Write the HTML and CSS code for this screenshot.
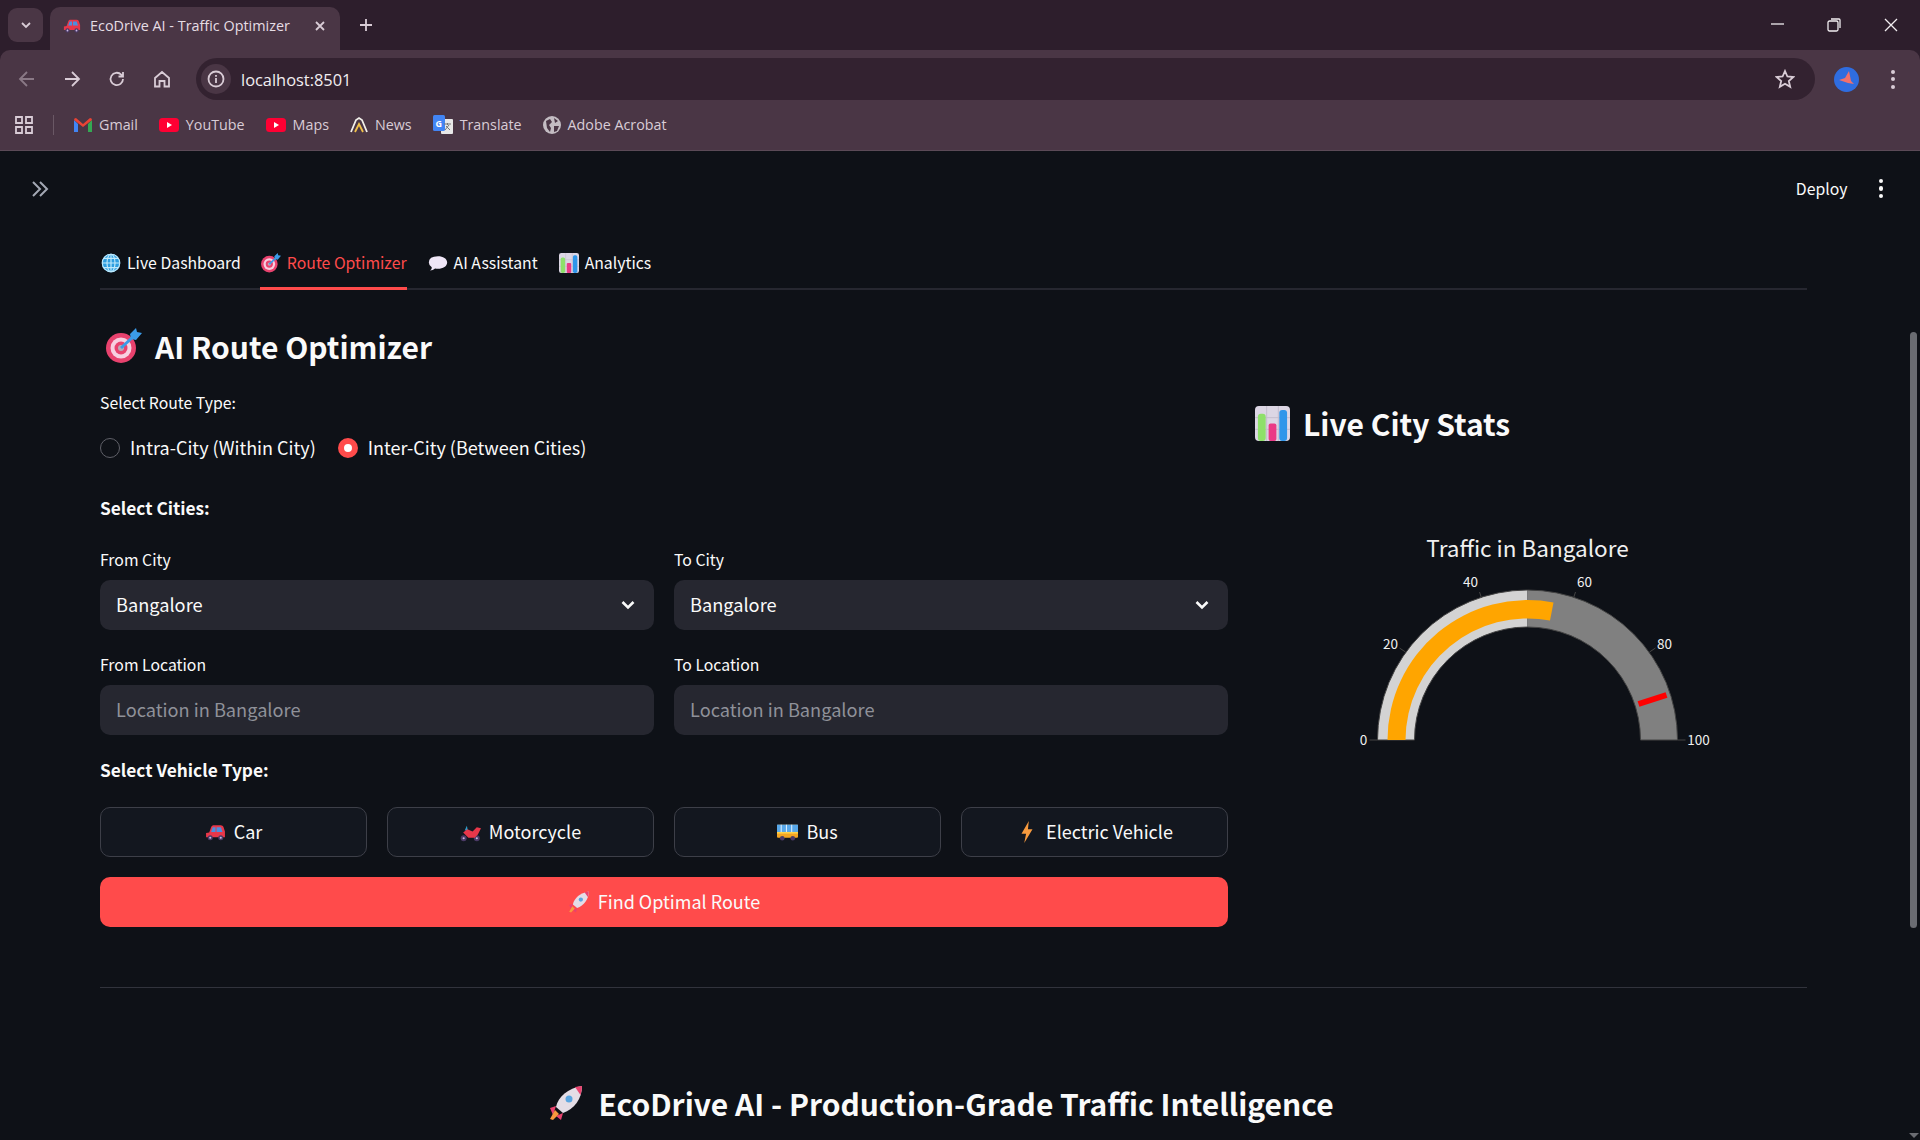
FILE: index.html
```html
<!DOCTYPE html>
<html lang="en">
<head>
    <meta charset="UTF-8">
    <meta name="viewport" content="width=device-width, initial-scale=1.0">
    <title>EcoDrive AI - Traffic Optimizer</title>
    <link rel="stylesheet" href="styles.css">
</head>
<body>
    <!-- Emoji drawings, reused below -->
    <svg class="defs" width="0" height="0">
        <symbol id="e-car" viewBox="0 0 20 20">
            <path d="M1 10.500L4 10l2-5.500Q6.500 3 8 3h7q2 0 2.500 1.500L19 9v5.500H1z" fill="#e8374a"/>
            <path d="M7.300 5H10v4.500H5.800zM11 5h4.200l1.500 4.500H11z" fill="#4b8fe0"/>
            <circle cx="5" cy="15" r="2.400" fill="#4b3a66"/>
            <circle cx="15" cy="15" r="2.400" fill="#4b3a66"/>
            <circle cx="5" cy="15" r="1" fill="#c9b8e0"/>
            <circle cx="15" cy="15" r="1" fill="#c9b8e0"/>
        </symbol>
        <symbol id="e-target" viewBox="0 0 36 36">
            <circle cx="15" cy="20" r="15" fill="#e8426e"/>
            <circle cx="15" cy="20" r="10.500" fill="#f7cfe0"/>
            <circle cx="15" cy="20" r="6.500" fill="#e8426e"/>
            <circle cx="15" cy="20" r="3" fill="#b9a9b8"/>
            <path d="M15 20L29 7" stroke="#3b9be8" stroke-width="3"/>
            <path d="M24 6l6-6 1 4 5 1-6 7-5-1z" fill="#3b9be8"/>
        </symbol>
        <symbol id="e-globe" viewBox="0 0 24 24">
            <circle cx="12" cy="12" r="11" fill="#2d9ee0"/>
            <g fill="none" stroke="#bfe9fb" stroke-width="1.400">
                <circle cx="12" cy="12" r="10.500"/>
                <ellipse cx="12" cy="12" rx="4.800" ry="10.500"/>
                <path d="M12 1.500v21M1.500 12h21M3 6.500h18M3 17.500h18"/>
            </g>
        </symbol>
        <symbol id="e-bubble" viewBox="0 0 24 24">
            <path d="M12 4c6 0 11 3 11 7.500S18 19 12 19q-2 0-3.500-.5Q6 21 2.500 21 5 19 4.500 17 1 15 1 11.500 1 4 12 4z" fill="#efe6f7"/>
        </symbol>
        <symbol id="e-chart" viewBox="0 0 36 36">
            <rect width="36" height="36" rx="4" fill="#dcd6e4"/>
            <path d="M12 0v36M24 0v36M0 12h36M0 24h36" stroke="#c3bccd" stroke-width="1"/>
            <rect x="3" y="8" width="8" height="28" rx="3" fill="#8ee06a"/>
            <rect x="14" y="18" width="8" height="18" rx="2" fill="#ea3a86"/>
            <rect x="25" y="4" width="8" height="32" rx="3" fill="#2f96ea"/>
        </symbol>
        <symbol id="e-moto" viewBox="0 0 20 20">
            <path d="M4.500 8l2-4.500 1 4.500z" fill="#2f9ec9"/>
            <circle cx="3.500" cy="15.500" r="2.800" fill="#4b3a66"/>
            <circle cx="16" cy="15.500" r="2.800" fill="#4b3a66"/>
            <circle cx="3.500" cy="15.500" r="1" fill="#c9b8e0"/>
            <circle cx="16" cy="15.500" r="1" fill="#c9b8e0"/>
            <path d="M3 10l4-3 5 2 4-4 4 1-3 6-3 3H8z" fill="#e8374a"/>
        </symbol>
        <symbol id="e-bus" viewBox="0 0 20 20">
            <rect y="2.500" width="20" height="12.500" rx="1" fill="#f5a623"/>
            <rect y="2.500" width="20" height="7" fill="#58a8ea"/>
            <path d="M4 2.500v7M9 2.500v7M14 2.500v7" stroke="#dcefff" stroke-width="1"/>
            <rect y="9.500" width="20" height="1.500" fill="#ffd34d"/>
            <circle cx="5" cy="15.500" r="2.200" fill="#4b3a66"/>
            <circle cx="15" cy="15.500" r="2.200" fill="#4b3a66"/>
        </symbol>
        <symbol id="e-bolt" viewBox="0 0 24 24">
            <path d="M14 0L6 14h5l-2 10 9-15h-5z" fill="#f79a3e"/>
        </symbol>
        <symbol id="e-rocket" viewBox="0 0 36 36">
            <path d="M8 22C10 12 20 3 34 1c0 13-8 23-19 27z" fill="#e4dde6"/>
            <path d="M27 2l7-1c0 3-.5 6-1.500 9z" fill="#e8426e"/>
            <circle cx="21" cy="14" r="3.500" fill="#5aa5e0"/>
            <path d="M8 21l-6 2 3 7zM15 28l-2 7-5-4z" fill="#e8426e"/>
            <path d="M7 25l4 4-6 6-3-1z" fill="#f79a3e"/>
        </symbol>
    </svg>

    <!-- Browser chrome -->
    <header class="browser">
        <div class="tabstrip">
            <button class="tab-search">
                <svg width="12" height="12" viewBox="0 0 12 12"><path d="M2 4l4 4 4-4" class="line-2"/></svg>
            </button>
            <div class="tab">
                <svg class="favicon" width="18" height="18"><use href="#e-car"/></svg>
                <span class="tab-title">EcoDrive AI - Traffic Optimizer</span>
                <svg class="tab-close" width="12" height="12" viewBox="0 0 12 12"><path d="M2 2l8 8M10 2l-8 8" class="line-2"/></svg>
            </div>
            <svg class="new-tab" width="14" height="14" viewBox="0 0 14 14"><path d="M7 1v12M1 7h12" class="line-2"/></svg>
            <div class="window-controls">
                <svg width="14" height="14" viewBox="0 0 14 14"><path d="M1 6h13" class="line-1"/></svg>
                <svg width="14" height="14" viewBox="0 0 14 14"><rect x="1" y="3" width="10" height="10" rx="1.500" class="line-1"/><path d="M4 1h8q1 0 1 1v8" class="line-1"/></svg>
                <svg width="14" height="14" viewBox="0 0 14 14"><path d="M1 1l12 12M13 1L1 13" class="line-1"/></svg>
            </div>
        </div>
        <div class="toolbar">
            <div class="nav-buttons">
                <svg class="dim" width="18" height="18" viewBox="0 0 18 18"><path d="M16 9H2M9 2L2 9l7 7" class="line-2"/></svg>
                <svg width="18" height="18" viewBox="0 0 18 18"><path d="M2 9h14M9 2l7 7-7 7" class="line-2"/></svg>
                <svg width="18" height="18" viewBox="0 0 18 18"><path d="M15 9a6.200 6.200 0 1 1-1.800-4.400L15 6.500M15 2v4.500h-4.500" class="line-2"/></svg>
                <svg width="18" height="18" viewBox="0 0 18 18"><path d="M2 8l7-6 7 6v8.500h-4.500V11h-5v5.500H2z" class="line-2"/></svg>
            </div>
            <div class="omnibox">
                <span class="site-chip">
                    <svg width="18" height="18" viewBox="0 0 18 18"><circle cx="9" cy="9" r="7.500" class="line-2"/><path d="M9 8v5M9 5v1.800" class="line-2"/></svg>
                </span>
                <span class="url">localhost:8501</span>
                <svg class="star" width="20" height="20" viewBox="0 0 20 20"><path d="M10 2l2.400 5.500 6 .5-4.600 4 1.400 5.800L10 14.800l-5.200 3 1.400-5.800-4.600-4 6-.5z" class="line-2"/></svg>
            </div>
            <div class="avatar">
                <svg width="25" height="25" viewBox="0 0 25 25"><circle cx="12.500" cy="12.500" r="12.500" fill="#2f6de0"/><path d="M15 4l2 10 3 3-6-1-9-3 6-2z" fill="#f0706c"/></svg>
            </div>
            <div class="more-dots"><i></i><i></i><i></i></div>
        </div>
        <nav class="bookmarks">
            <svg class="apps" width="18" height="18" viewBox="0 0 18 18"><path d="M1 1h6v6H1zM11 1h6v6h-6zM1 11h6v6H1zM11 11h6v6h-6z" class="line-2"/></svg>
            <span class="bm-sep"></span>
            <a class="bm">
                <svg width="18" height="14" viewBox="0 0 18 14"><path d="M0 2v12h4V6z" fill="#4285f4"/><path d="M14 6v8h4V2z" fill="#34a853"/><path d="M0 2q0-2 2-2l7 6 7-6q2 0 2 2l-9 7z" fill="#ea4335"/></svg>Gmail</a>
            <a class="bm">
                <svg width="20" height="14" viewBox="0 0 20 14"><rect width="20" height="14" rx="3.500" fill="#ff0033"/><path d="M8 4l5 3-5 3z" fill="#fff"/></svg>YouTube</a>
            <a class="bm">
                <svg width="20" height="14" viewBox="0 0 20 14"><rect width="20" height="14" rx="3.500" fill="#ff0033"/><path d="M8 4l5 3-5 3z" fill="#fff"/></svg>Maps</a>
            <a class="bm">
                <svg width="18" height="18" viewBox="0 0 18 18"><path d="M1 16L6 4l3-2 3 2 5 12" fill="none" stroke="#f2f0ea" stroke-width="1.800"/><path d="M5 16l4-8 4 8" fill="none" stroke="#f0c14a" stroke-width="1.800"/></svg>News</a>
            <a class="bm">
                <svg width="20" height="20" viewBox="0 0 20 20"><rect x="8" y="4" width="12" height="15" rx="1" fill="#e8e8e8"/><rect width="12" height="16" rx="1.500" fill="#4285f4"/><text x="2.500" y="12" class="bm-g">G</text><path d="M11 9h7M14.500 8v2M12 15l4-5M13 11l4 4" stroke="#777" stroke-width="1" fill="none"/></svg>Translate</a>
            <a class="bm">
                <svg width="18" height="18" viewBox="0 0 18 18"><circle cx="9" cy="9" r="9" fill="#c3bcc2"/><path d="M3 5l4-2 2 3-3 3 2 3-1 4-3-4zM11 2l4 3-3 2zM11 10h5l-2 5-3 1z" fill="#4a3645"/></svg>Adobe Acrobat</a>
        </nav>
    </header>

    <div class="app">
        <div class="app-header">
            <svg class="sidebar-toggle" width="20" height="20" viewBox="0 0 20 20"><path d="M3 3l7 7-7 7M10 3l7 7-7 7"/></svg>
            <span class="deploy">Deploy</span>
            <div class="app-dots"><i></i><i></i><i></i></div>
        </div>

        <main class="main">
            <div class="tabs">
                <div class="tab-item"><svg width="20" height="20"><use href="#e-globe"/></svg>Live Dashboard</div>
                <div class="tab-item active"><svg width="20" height="20"><use href="#e-target"/></svg>Route Optimizer</div>
                <div class="tab-item"><svg width="20" height="20"><use href="#e-bubble"/></svg>AI Assistant</div>
                <div class="tab-item"><svg width="20" height="20"><use href="#e-chart"/></svg>Analytics</div>
            </div>

            <div class="columns">
                <section class="col-left">
                    <h2 class="page-title"><svg width="36" height="36"><use href="#e-target"/></svg>AI Route Optimizer</h2>
                    <div class="field-label route-label">Select Route Type:</div>
                    <div class="radio-group">
                        <label class="radio"><span class="dot"></span>Intra-City (Within City)</label>
                        <label class="radio checked"><span class="dot"></span>Inter-City (Between Cities)</label>
                    </div>
                    <div class="sub-title cities-title">Select Cities:</div>
                    <div class="field-grid">
                        <div class="field">
                            <div class="field-label">From City</div>
                            <div class="control">Bangalore
                                <svg width="14" height="10" viewBox="0 0 14 10"><path d="M1.500 2l5.500 5.500L12.500 2"/></svg>
                            </div>
                        </div>
                        <div class="field">
                            <div class="field-label">To City</div>
                            <div class="control">Bangalore
                                <svg width="14" height="10" viewBox="0 0 14 10"><path d="M1.500 2l5.500 5.500L12.500 2"/></svg>
                            </div>
                        </div>
                        <div class="field">
                            <div class="field-label">From Location</div>
                            <div class="control placeholder">Location in Bangalore</div>
                        </div>
                        <div class="field">
                            <div class="field-label">To Location</div>
                            <div class="control placeholder">Location in Bangalore</div>
                        </div>
                    </div>
                    <div class="sub-title vehicle-title">Select Vehicle Type:</div>
                    <div class="vehicle-row">
                        <button class="btn"><svg width="21" height="21"><use href="#e-car"/></svg>Car</button>
                        <button class="btn"><svg width="21" height="21"><use href="#e-moto"/></svg>Motorcycle</button>
                        <button class="btn"><svg width="21" height="21"><use href="#e-bus"/></svg>Bus</button>
                        <button class="btn"><svg width="22" height="22"><use href="#e-bolt"/></svg>Electric Vehicle</button>
                    </div>
                    <button class="btn primary"><svg width="22" height="22"><use href="#e-rocket"/></svg>Find Optimal Route</button>
                </section>

                <section class="col-right">
                    <h2 class="stats-title"><svg width="35" height="35"><use href="#e-chart"/></svg>Live City Stats</h2>
                    <!-- r 150/113 track, bar 140/122, value 56, threshold 90 -->
                    <svg class="gauge" width="564" height="260" viewBox="0.500 0 564 260">
                        <text x="284" y="37" class="g-title">Traffic in Bangalore</text>
                        <path d="M134 220A150 150 0 0 1 284 70V107A113 113 0 0 0 171 220z" fill="#d3d3d3"/>
                        <path d="M284 70A150 150 0 0 1 434 220H397A113 113 0 0 0 284 107z" fill="#808080"/>
                        <path d="M134 220A150 150 0 0 1 434 220H397A113 113 0 0 0 171 220z" fill="none" stroke="#444" stroke-width="1"/>
                        <path d="M144 220A140 140 0 0 1 310 82.500L306.500 100.500A122 122 0 0 0 162 220z" fill="#ffa500"/>
                        <path d="M395 184L423 175" stroke="#f00" stroke-width="6"/>
                        <path d="M126 220h8M434 220h8M162 132l-6-4M406 132l6-4M238 78l-2-6M330 78l2-6" stroke="#444" stroke-width="1"/>
                        <text x="120" y="225" class="g-tick">0</text>
                        <text x="455" y="225" class="g-tick">100</text>
                        <text x="147" y="129" class="g-tick">20</text>
                        <text x="421" y="129" class="g-tick">80</text>
                        <text x="227" y="67" class="g-tick">40</text>
                        <text x="341" y="67" class="g-tick">60</text>
                    </svg>
                </section>
            </div>

            <hr class="divider">

            <h2 class="footer-title"><svg width="36" height="36"><use href="#e-rocket"/></svg>EcoDrive AI - Production-Grade Traffic Intelligence</h2>
        </main>

        <div class="scrollbar">
            <div class="thumb"></div>
            <div class="arrow"></div>
        </div>
    </div>
</body>
</html>
```

FILE: styles.css
```css
* {
    box-sizing: border-box;
}
html, body {
    height: 100%;
}
body {
    margin: 0;
    height: 1140px;
    overflow: hidden;
    display: flex;
    flex-direction: column;
    background-color: #0e1117;
    color: #fafafa;
    font-family: "Noto Sans CJK SC", "Noto Sans", sans-serif;
}
.defs {
    position: absolute;
}
.line-1, .line-2 {
    fill: none;
    stroke: #d9ccd6;
}
.line-1 {
    stroke: #f2eef1;
    stroke-width: 1.3;
}
.line-2 {
    stroke-width: 1.8;
}

/* browser chrome */
.browser {
    font-family: "Open Sans", "Noto Sans", sans-serif;
    background-color: #2d1e2c;
}
.tabstrip {
    height: 50px;
    display: flex;
    align-items: flex-end;
}
.tab-search {
    width: 35px;
    height: 34px;
    margin: 0 7px 8px 8px;
    padding: 0;
    border: none;
    border-radius: 9px;
    background-color: #4a3645;
    display: flex;
    align-items: center;
    justify-content: center;
}
.tab {
    width: 290px;
    height: 43px;
    padding: 0 14px 6px 13px;
    border-radius: 10px 10px 0 0;
    background-color: #4a3645;
    display: flex;
    align-items: center;
    color: #e6dde4;
}
.favicon {
    flex: none;
}
.tab-title {
    margin-left: 9px;
    flex: 1;
    font-size: 14.400px;
    white-space: nowrap;
}
.new-tab {
    margin: 0 0 18px 19px;
}
.window-controls {
    margin-left: auto;
    margin-bottom: 18px;
    margin-right: 22px;
    display: flex;
    gap: 43px;
}
.toolbar {
    height: 50px;
    padding: 8px 0 0 18px;
    border-radius: 10px 10px 0 0;
    background-color: #4a3645;
    display: flex;
    align-items: center;
}
.nav-buttons {
    display: flex;
    gap: 27px;
}
.nav-buttons .dim {
    opacity: .45;
}
.omnibox {
    width: 1619px;
    height: 42px;
    margin-left: 25px;
    padding: 0 20px 0 5px;
    border-radius: 21px;
    background-color: #332230;
    display: flex;
    align-items: center;
}
.site-chip {
    width: 30px;
    height: 30px;
    border-radius: 50%;
    background-color: #4a3645;
    display: flex;
    align-items: center;
    justify-content: center;
}
.url {
    margin-left: 10px;
    font-size: 16.400px;
    color: #f2eef1;
}
.star {
    margin-left: auto;
}
.avatar {
    margin-left: 19px;
    height: 25px;
}
.more-dots {
    margin-left: 32px;
    display: flex;
    flex-direction: column;
    gap: 3.500px;
}
.more-dots i {
    width: 4px;
    height: 4px;
    border-radius: 50%;
    background-color: #d9ccd6;
}
.bookmarks {
    height: 51px;
    padding: 0 0 1px 15px;
    background-color: #4a3645;
    display: flex;
    align-items: center;
    border-bottom: 1px solid #5b4a57;
}
.bm-sep {
    width: 1px;
    height: 20px;
    margin: 0 20px;
    background-color: #6a5865;
}
.bm {
    margin-right: 21px;
    display: flex;
    align-items: center;
    gap: 7px;
    font-size: 14.300px;
    color: #d9ccd6;
}
.bm-g {
    font-size: 9px;
    font-weight: 700;
    fill: #fff;
}

/* streamlit app */
.app {
    position: relative;
    flex: 1;
}
.app-header {
    height: 76px;
    padding-right: 37px;
    display: flex;
    align-items: center;
}
.sidebar-toggle {
    margin-left: 30px;
    fill: none;
    stroke: #a3a8b4;
    stroke-width: 2;
}
.deploy {
    margin-left: auto;
    padding-bottom: 2px;
    font-size: 15.800px;
}
.app-dots {
    margin-left: 31px;
    padding-bottom: 1px;
    display: flex;
    flex-direction: column;
    gap: 3px;
}
.app-dots i {
    width: 4.500px;
    height: 4.500px;
    border-radius: 50%;
    background-color: #fafafa;
}
.main {
    width: 1707px;
    margin-left: 100px;
}
.tabs {
    height: 63px;
    padding-top: 13px;
    display: flex;
    gap: 20px;
    border-bottom: 2px solid #262730;
}
.tab-item {
    height: 50px;
    padding: 0 0 2px 1px;
    display: flex;
    align-items: center;
    gap: 6px;
    font-size: 15.800px;
    line-height: 24px;
    border-bottom: 3px solid transparent;
}
.tab-item svg {
    margin-top: 1px;
}
.tab-item.active {
    color: #ff4b4b;
    border-bottom-color: #ff4b4b;
    margin-left: -1px;
}
.columns {
    display: grid;
    grid-template-columns: 1128px 1fr;
    gap: 16px;
}
.page-title, .stats-title, .footer-title {
    margin: 0;
    display: flex;
    align-items: center;
    height: 56px;
    font-size: 30px;
    font-weight: 600;
    line-height: 56px;
}
.page-title {
    margin-top: 28px;
    gap: 13px;
    padding-left: 6px;
}
.stats-title {
    margin-top: 105px;
    gap: 13px;
    padding-left: 11px;
}
.field-label {
    font-size: 15.800px;
    line-height: 24px;
    margin-bottom: 8px;
}
.route-label {
    margin: 17px 0 0;
}
.radio-group {
    margin-top: 17px;
    height: 30px;
    display: flex;
    gap: 22px;
}
.radio {
    display: flex;
    align-items: center;
    gap: 10px;
    font-size: 18px;
}
.dot {
    flex: none;
    width: 20px;
    height: 20px;
    margin-top: 2px;
    border: 1.500px solid #5f6068;
    border-radius: 50%;
}
.radio.checked .dot {
    border: 6.500px solid #ff4b4b;
    background-color: #fff;
}
.sub-title {
    font-size: 17.300px;
    font-weight: 600;
    line-height: 30px;
}
.cities-title {
    margin-top: 31px;
}
.field-grid {
    margin-top: 25px;
    display: grid;
    grid-template-columns: 1fr 1fr;
    gap: 23px 20px;
}
.control {
    height: 50px;
    padding: 0 19px 2px 16px;
    border-radius: 10px;
    background-color: #262730;
    display: flex;
    align-items: center;
    justify-content: space-between;
    font-size: 18.200px;
}
.control svg {
    margin-top: 2px;
    fill: none;
    stroke: #fafafa;
    stroke-width: 2.600;
}
.control.placeholder {
    color: #8f9199;
}
.vehicle-title {
    margin-top: 20px;
}
.vehicle-row {
    margin-top: 22px;
    display: grid;
    grid-template-columns: repeat(4, 1fr);
    gap: 20px;
}
.btn {
    width: 100%;
    height: 50px;
    padding: 0 0 2px;
    border: 1px solid #3d3f48;
    border-radius: 10px;
    background-color: #13171f;
    color: #fafafa;
    font-family: inherit;
    font-size: 18px;
    display: flex;
    align-items: center;
    justify-content: center;
    gap: 8px;
}
.btn svg {
    margin-top: 2px;
}
.btn.primary {
    margin-top: 20px;
    border: none;
    background-color: #ff4b4b;
}
.gauge {
    display: block;
    margin-top: 69px;
}
.g-title {
    font-size: 22.500px;
    text-anchor: middle;
    fill: #f0f0f0;
}
.g-tick {
    font-size: 13.500px;
    text-anchor: middle;
    fill: #f0f0f0;
}
.divider {
    margin: 60px 0 0;
    border: none;
    border-top: 1px solid #31333c;
}
.footer-title {
    margin-top: 87px;
    padding-right: 25px;
    justify-content: center;
    gap: 14px;
}

.scrollbar {
    position: absolute;
    top: 0;
    right: 0;
    width: 20px;
    height: 100%;
}
.thumb {
    position: absolute;
    top: 181px;
    left: 10px;
    width: 7px;
    height: 596px;
    border-radius: 4px;
    background-color: #6a6c72;
}
.arrow {
    position: absolute;
    bottom: 2px;
    left: 9px;
    width: 0;
    height: 0;
    border: 5px solid transparent;
    border-top-color: #6a6c72;
    border-bottom: none;
}
```
